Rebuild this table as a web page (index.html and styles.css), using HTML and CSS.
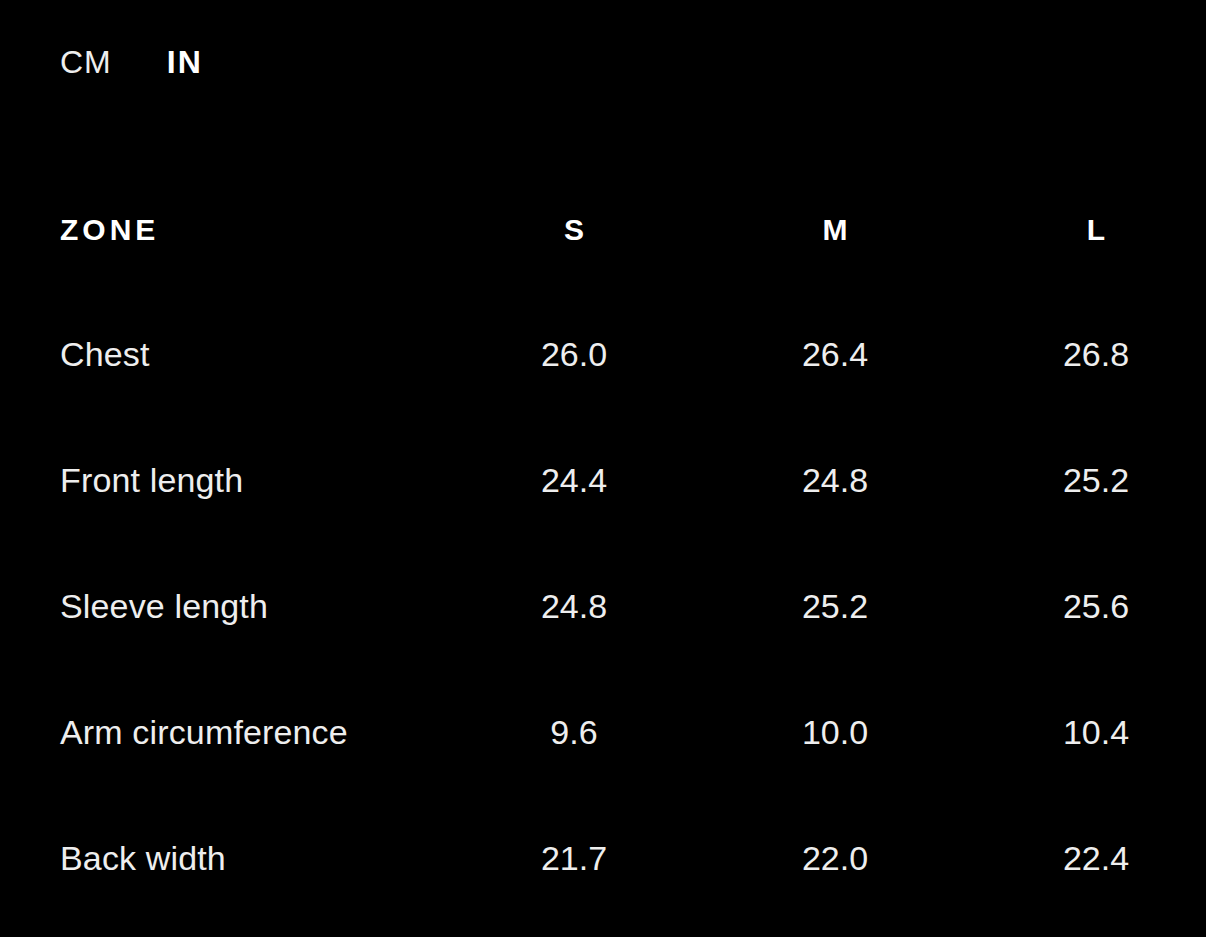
FILE: index.html
```html
<!DOCTYPE html>
<html lang="en">
<head>
<meta charset="utf-8">
<title>Size guide</title>
<link rel="stylesheet" href="styles.css">
</head>
<body>
<main class="page">
  <div class="units">
    <span class="unit">CM</span>
    <span class="unit unit-active">IN</span>
  </div>
  <div class="table">
    <div class="row row-head">
      <div class="cell cell-zone">ZONE</div>
      <div class="cell">S</div>
      <div class="cell">M</div>
      <div class="cell">L</div>
    </div>
    <div class="row">
      <div class="cell cell-zone">Chest</div>
      <div class="cell">26.0</div>
      <div class="cell">26.4</div>
      <div class="cell">26.8</div>
    </div>
    <div class="row">
      <div class="cell cell-zone">Front length</div>
      <div class="cell">24.4</div>
      <div class="cell">24.8</div>
      <div class="cell">25.2</div>
    </div>
    <div class="row">
      <div class="cell cell-zone">Sleeve length</div>
      <div class="cell">24.8</div>
      <div class="cell">25.2</div>
      <div class="cell">25.6</div>
    </div>
    <div class="row">
      <div class="cell cell-zone">Arm circumference</div>
      <div class="cell">9.6</div>
      <div class="cell">10.0</div>
      <div class="cell">10.4</div>
    </div>
    <div class="row">
      <div class="cell cell-zone">Back width</div>
      <div class="cell">21.7</div>
      <div class="cell">22.0</div>
      <div class="cell">22.4</div>
    </div>
  </div>
</main>
</body>
</html>
```
FILE: styles.css
```css
html, body {
  margin: 0;
  padding: 0;
  background: #000;
}
body {
  font-family: "Liberation Sans", Arial, sans-serif;
  color: #fff;
  width: 1206px;
  height: 937px;
  overflow: hidden;
}
.page {
  padding: 47px 60px 0 60px;
}
.units {
  display: flex;
  gap: 55px;
  font-size: 32px;
  line-height: 31px;
  height: 31px;
}
.unit {
  color: #eeeeee;
  letter-spacing: 1px;
}
.unit-active {
  font-weight: 700;
  letter-spacing: 2px;
  color: #fff;
}
.table {
  margin-top: 91px;
}
.row {
  display: grid;
  grid-template-columns: 353px 200px 200px 200px;
  column-gap: 61px;
  align-items: center;
  height: 126px;
  font-size: 34px;
  line-height: 34px;
  color: #eeeeee;
}
.row-head {
  height: 122px;
  font-size: 30px;
  line-height: 30px;
  font-weight: 700;
  letter-spacing: 4px;
  color: #fff;
}
.cell {
  text-align: center;
  white-space: nowrap;
}
.row-head .cell:not(.cell-zone) {
  letter-spacing: 0;
}
.cell-zone {
  text-align: left;
}
.row:not(.row-head) .cell-zone {
  letter-spacing: 0.15px;
}
```
